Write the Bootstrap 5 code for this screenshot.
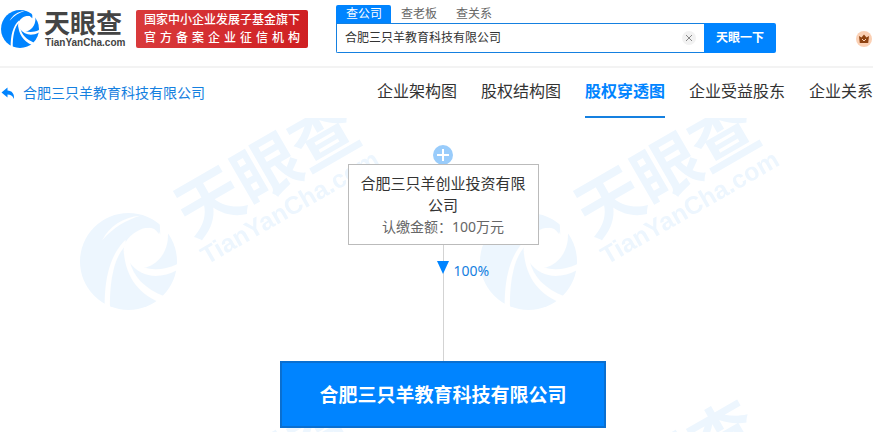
<!DOCTYPE html>
<html lang="zh-CN">
<head>
<meta charset="utf-8">
<meta name="viewport" content="width=device-width, initial-scale=1">
<title>天眼查 - 股权穿透图</title>
<link rel="stylesheet" href="https://cdn.jsdelivr.net/npm/bootstrap@5.3.0/dist/css/bootstrap.min.css">
<style>
  :root { --tyc-blue: #0084ff; }
  body { font-family: "Noto Sans", "Noto Sans CJK SC", sans-serif; color: #333; background: #fff; }
  a { text-decoration: none; }
  .site-header { height: 68px; border-bottom: 2px solid #f3f3f3; }
  .brand-logo { width: 126px; height: 50px; }
  .slogan { width: 172px; margin: 10px 0 0 10px; padding: 1px 8px; background: linear-gradient(90deg, #d93a3c, #cf1f22); font-size: 12px; line-height: 18px; font-weight: 500; border-radius: 2px; }
  .slogan-spread { text-align-last: justify; }
  .search-area { width: 440px; margin-left: 28px; padding-top: 5px; }
  .search-tab { font-size: 12px; line-height: 18px; padding: 0 9px 0 10px; color: #666; border: 0; background: none; }
  .search-tab.active { background: var(--tyc-blue); color: #fff; border-radius: 2px 2px 0 0; }
  .search-field { height: 30px; border: 1px solid #1580e0; border-right: 0; border-radius: 0 0 0 2px; }
  .search-field input { font-size: 12px; line-height: 20px; padding: 0 8px; color: #333; outline: 0; min-width: 0; }
  .clear-btn { width: 14px; height: 14px; margin-right: 8px; }
  .go-btn { width: 72px; height: 30px; font-size: 12px; line-height: 18px; background: var(--tyc-blue); color: #fff; border-radius: 0 2px 2px 0; }
  .member { width: 16px; height: 16px; margin-top: 31px; margin-right: 1px; }
  .sub-bar { height: 50px; }
  .back-link { font-size: 14px; line-height: 20px; color: #1580e0; gap: 8px; }
  .chart-tabs { gap: 24px; font-size: 16px; line-height: 24px; }
  .chart-tabs a { color: #333; white-space: nowrap; padding-top: 11px; height: 50px; border-bottom: 2px solid transparent; }
  .chart-tabs a.active { color: var(--tyc-blue); font-weight: 700; border-color: #1580e0; }
  .chart { min-height: 314px; padding: 27px 0 4px 13px; }
  .watermark { inset: 0; width: 100%; height: 100%; }
  .holder { width: 191px; border: 1px solid #bbb; padding: 7px 10px 6px; font-size: 15px; line-height: 22px; background: #fff; }
  .holder small { display: block; font-size: 14px; line-height: 22px; color: #666; }
  .expand-btn { width: 20px; height: 20px; margin-bottom: -1px; }
  .link-row { height: 116px; }
  .stem { width: 1px; background: #d3d3d3; }
  .arrow-mark { width: 14px; height: 13px; top: 16px; left: 50%; transform: translateX(-50%); }
  .ratio-text { left: 11px; top: 16px; font-size: 14px; line-height: 20px; color: #1580e0; }
  .target { width: 326px; height: 67px; border: 2px solid #0a6fd0; background: var(--tyc-blue); color: #fff; font-size: 19px; line-height: 28px; font-weight: 700; }
</style>
<script src="https://cdn.jsdelivr.net/npm/bootstrap@5.3.0/dist/js/bootstrap.bundle.min.js"></script>
</head>
<body class="overflow-x-hidden">
<svg width="0" height="0" class="position-absolute" aria-hidden="true">
  <symbol id="swirl" viewBox="12 23 290 290">
    <circle cx="157" cy="168" r="145" fill="currentColor"/>
    <path d="M143 130C143 100 185 66 220 66C237 66 248 72 252 88L250 50L290 40L275 85C278 145 235 187 195 188C165 182 143 160 143 130Z" fill="#fff"/>
    <path d="M180 35C218 30 256 50 247 86C238 68 225 66 205 68Z" fill="currentColor"/>
    <path d="M78 105C100 62 140 35 192 31C150 45 112 65 78 105Z" fill="#fff"/>
    <path d="M148 103C104 145 84 215 86 310L102 310C100 225 115 150 150 120Z" fill="#fff"/>
    <path d="M142 130C146 205 180 262 250 290L264 272C205 248 172 215 160 165Z" fill="#fff"/>
    <path d="M158 168C195 220 255 222 310 190L306 174C255 199 210 195 172 172Z" fill="#fff"/>
  </symbol>
</svg>

<header class="site-header d-flex align-items-start">
  <a href="#" class="flex-shrink-0" aria-label="天眼查">
    <svg class="brand-logo d-block" viewBox="0 0 126 50">
      <use href="#swirl" x="1" y="10" width="38" height="38" color="#0084ff"/>
      <text x="44" y="33" font-family="Noto Sans CJK SC, sans-serif" font-size="26" font-weight="700" fill="#444">天眼查</text>
      <text x="45" y="46" font-family="Liberation Sans, sans-serif" font-size="10" font-weight="700" fill="#444">TianYanCha.com</text>
    </svg>
  </a>
  <div class="slogan text-white flex-shrink-0">
    <div class="text-nowrap">国家中小企业发展子基金旗下</div>
    <div class="slogan-spread">官 方 备 案 企 业 征 信 机 构</div>
  </div>
  <form class="search-area">
    <div class="d-flex">
      <button type="button" class="search-tab active">查公司</button>
      <button type="button" class="search-tab">查老板</button>
      <button type="button" class="search-tab">查关系</button>
    </div>
    <div class="d-flex">
      <div class="search-field d-flex align-items-center flex-grow-1">
        <input type="text" class="border-0 flex-grow-1" value="合肥三只羊教育科技有限公司" aria-label="公司名称">
        <button type="button" class="clear-btn btn p-0 border-0 d-flex" aria-label="清除">
          <svg viewBox="0 0 14 14" width="14" height="14"><circle cx="7" cy="7" r="7" fill="#f2f2f2"/><path d="M4 4l6 6M10 4l-6 6" stroke="#888" fill="none"/></svg>
        </button>
      </div>
      <button type="button" class="go-btn btn border-0 p-0 fw-bold">天眼一下</button>
    </div>
  </form>
  <a href="#" class="member ms-auto d-flex flex-shrink-0" aria-label="会员">
    <svg viewBox="0 0 16 16" width="16" height="16"><circle cx="8" cy="8" r="8" fill="#fbd0b4"/><path d="M3 5l2.500 1.500L8 3.500l2.500 3L13 5l-.8 7H3.800z" fill="#8f4311"/><path d="M6 8l2 2 2-2" stroke="#fbd0b4" fill="none"/></svg>
  </a>
</header>

<div class="sub-bar d-flex justify-content-between align-items-center">
  <a href="#" class="back-link d-flex align-items-center text-nowrap">
    <svg width="15" height="13" viewBox="0 0 15 13"><path d="M1.500 5.500L7.500.5v3C12 3.500 14.500 7 14 12C12.500 8.800 10.500 7.600 7.500 7.600v3z" fill="#0084ff"/></svg>
    合肥三只羊教育科技有限公司
  </a>
  <nav class="chart-tabs d-flex">
    <a href="#">企业架构图</a>
    <a href="#">股权结构图</a>
    <a href="#" class="active" aria-current="page">股权穿透图</a>
    <a href="#">企业受益股东</a>
    <a href="#">企业关系</a>
  </nav>
</div>

<main class="chart position-relative overflow-hidden">
  <svg class="watermark position-absolute" aria-hidden="true">
    <defs>
      <pattern id="wm" patternUnits="userSpaceOnUse" x="0" y="-22" width="400" height="300">
        <g fill="#edf6fe" color="#edf6fe">
          <use href="#swirl" x="80" y="117" width="97" height="97"/>
          <text transform="translate(193 143) rotate(-30)" font-family="Noto Sans CJK SC, sans-serif" font-size="66" font-weight="700">天眼查</text>
          <text transform="translate(207 169) rotate(-30)" font-family="Liberation Sans, sans-serif" font-size="25" font-weight="700">TianYanCha.com</text>
        </g>
      </pattern>
    </defs>
    <rect width="100%" height="100%" fill="url(#wm)"/>
  </svg>
  <div class="position-relative d-flex flex-column align-items-center">
    <button type="button" class="expand-btn btn p-0 border-0 d-flex" aria-label="展开">
      <svg width="20" height="20" viewBox="0 0 20 20"><circle cx="10" cy="10" r="10" fill="#99ccfb"/><path d="M10 4v12M4 10h12" stroke="#fff" stroke-width="2"/></svg>
    </button>
    <div class="holder text-center">合肥三只羊创业投资有限公司<small>认缴金额：100万元</small></div>
    <div class="link-row d-flex">
      <div class="stem position-relative">
        <svg class="arrow-mark position-absolute" viewBox="0 0 14 13"><path d="M1 0h12L7 13z" fill="#0084ff"/></svg>
        <span class="ratio-text position-absolute">100%</span>
      </div>
    </div>
    <div class="target d-flex align-items-center justify-content-center">合肥三只羊教育科技有限公司</div>
  </div>
</main>
</body>
</html>
